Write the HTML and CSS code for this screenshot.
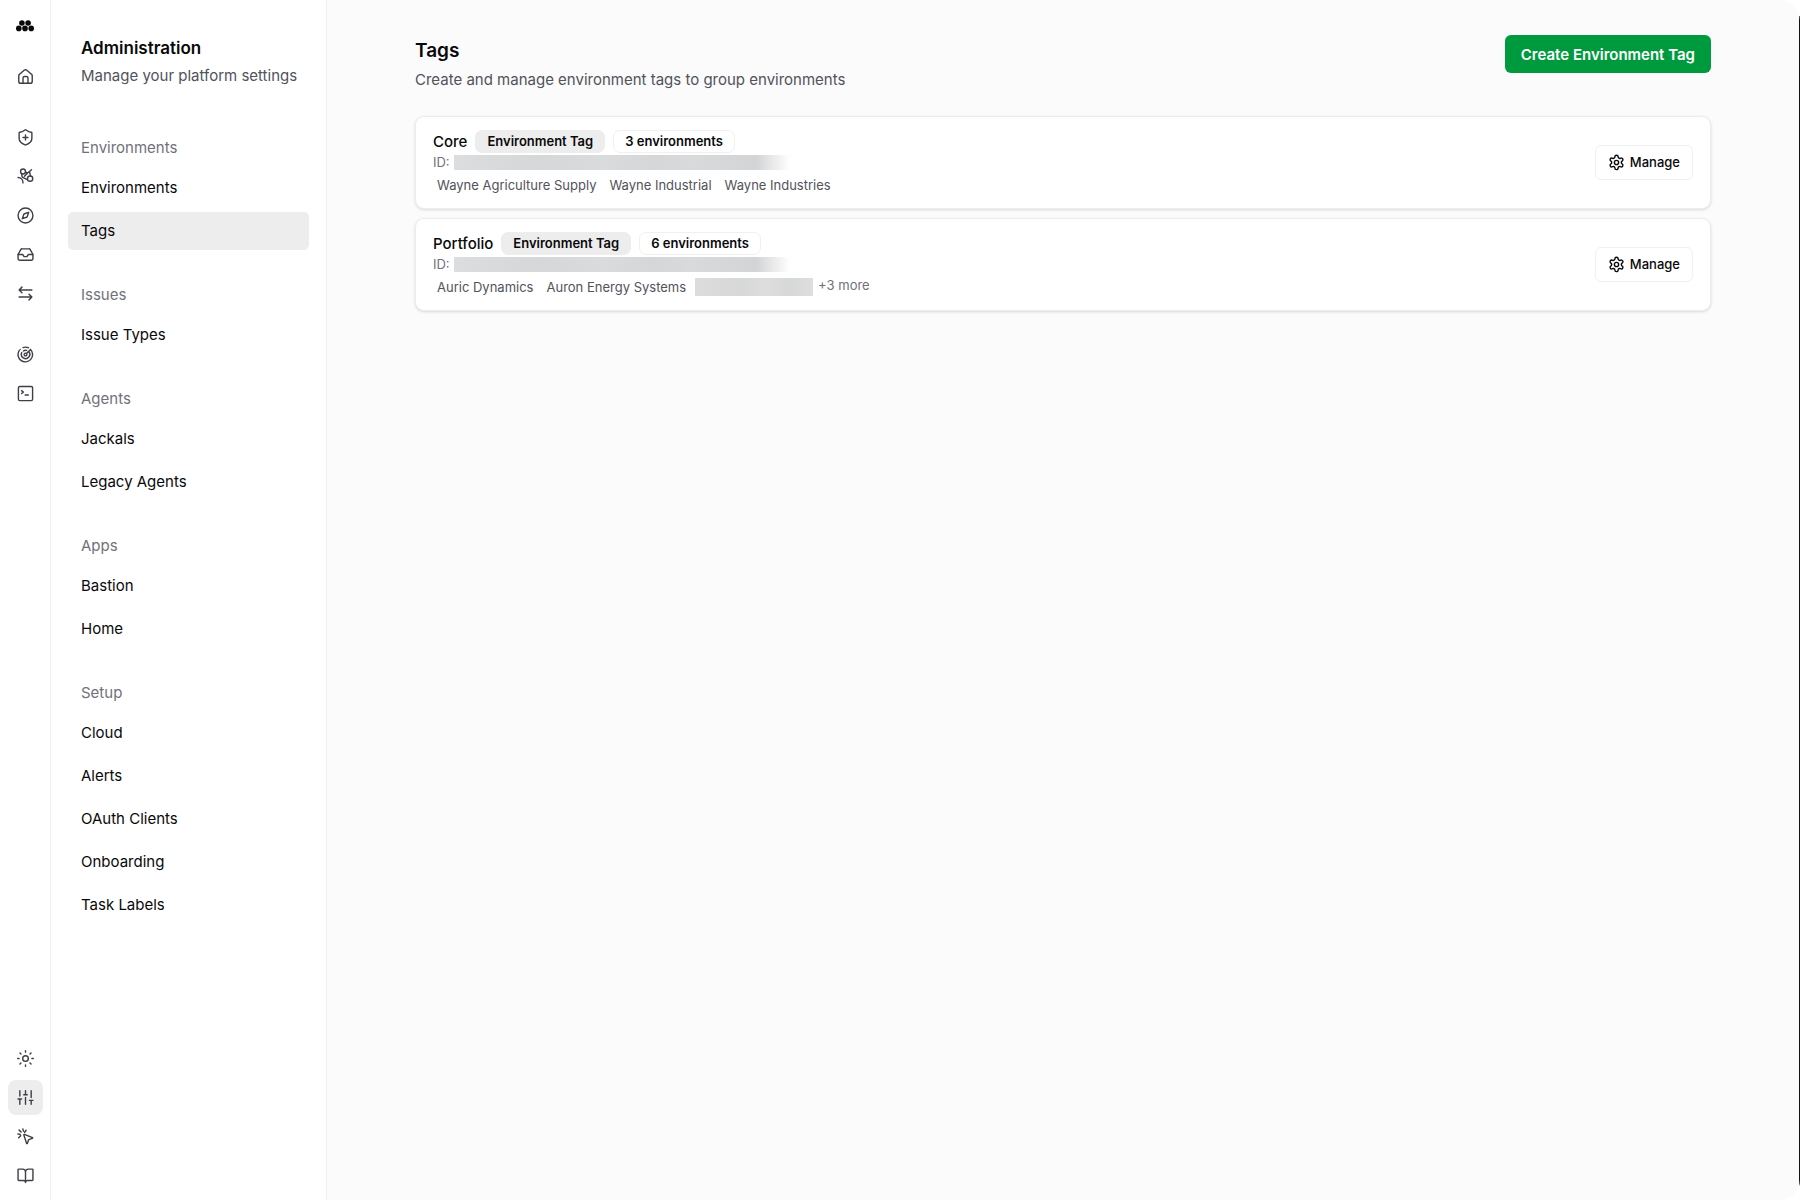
FILE: index.html
```html
<!DOCTYPE html>
<html lang="en">
<head>
    <meta charset="utf-8">
    <title>Tags - Administration</title>
    <link rel="stylesheet" href="styles.css">
</head>
<body>
    <div class="app">
        <nav class="rail" aria-label="Main">
            <a class="logo" href="#" aria-label="Dashboard">
                <svg width="18" height="12" viewBox="0 0 18 12" fill="currentColor"><circle cx="5.9" cy="3" r="2.8"/><circle cx="12.1" cy="3" r="2.8"/><circle cx="2.8" cy="8.4" r="2.8"/><circle cx="9" cy="8.4" r="2.8"/><circle cx="15.2" cy="8.4" r="2.8"/></svg>
            </a>
            <div class="rail-group">
                <a href="#" aria-label="Home"><svg class="icon" viewBox="0 0 24 24"><path d="M2.5 11a3 3 0 0 1 1.1-2.3l6.5-5.6a3 3 0 0 1 3.8 0l6.5 5.6a3 3 0 0 1 1.1 2.3v8a2.6 2.6 0 0 1-2.6 2.6H5.1A2.6 2.6 0 0 1 2.5 19z"/><path d="M8.5 21.5V14a2 2 0 0 1 2-2h3a2 2 0 0 1 2 2v7.5"/></svg></a>
            </div>
            <div class="rail-group">
                <a href="#" aria-label="Security"><svg class="icon" viewBox="0 0 24 24"><path d="M21 13c0 5-3.5 7.5-8.500 9.500a1.500 1.500 0 0 1-1 0C6.500 20.500 3 18 3 13V5.500a1 1 0 0 1 1-1c2.500 0 5-1.200 7.200-3a1.300 1.300 0 0 1 1.600 0c2.200 1.800 4.700 3 7.200 3a1 1 0 0 1 1 1z"/><path d="M8.500 12h7M12 8.500v7"/></svg></a>
                <a href="#" aria-label="Agents"><svg class="icon" viewBox="0 0 24 24"><circle cx="8.500" cy="5" r="3.500"/><circle cx="18.500" cy="15" r="3.700"/><path d="m15 7 5.500-4.500M17.500 5l1.500 6M6.500 8.500l1 4.500 7 3.500M12 6l3 1-4.500 4.500M1.500 13.500c4 0 7 3 7 7.500"/></svg></a>
                <a href="#" aria-label="Explore"><svg class="icon" viewBox="0 0 24 24"><circle cx="12" cy="12" r="10.500"/><path d="m16.500 7.500-2 6a1.600 1.600 0 0 1-1 1l-6 2 2-6a1.600 1.600 0 0 1 1-1z"/></svg></a>
                <a href="#" aria-label="Inbox"><svg class="icon" viewBox="0 0 24 24"><path d="M22.500 12H16l-2 3h-4l-2-3H1.500"/><path d="M5.300 5 1.500 12v6a2 2 0 0 0 2 2h17a2 2 0 0 0 2-2v-6l-3.800-7a2 2 0 0 0-1.800-1H7.100a2 2 0 0 0-1.800 1z"/></svg></a>
                <a href="#" aria-label="Transfers"><svg class="icon" viewBox="0 0 24 24"><path d="M7 3 3 7l4 4M3 7h18M17 13l4 4-4 4M21 17H3"/></svg></a>
            </div>
            <div class="rail-group">
                <a href="#" aria-label="Radar"><svg class="icon" viewBox="0 0 24 24"><path d="M19.100 4.900A10.300 10.300 0 1 1 3.100 6.500M4.500 4.800h.01M8.500 2.200A10.300 10.300 0 0 1 16 2.500M16.500 7.700a6 6 0 1 1-9.800 1.500M9 7.100a6 6 0 0 1 4.500-.9M18 12a6 6 0 0 1-4 5.500M13.400 10.600l5.700-5.700"/><circle cx="12" cy="12" r="2"/></svg></a>
                <a href="#" aria-label="Console"><svg class="icon" viewBox="0 0 24 24"><rect x="2" y="2" width="20" height="20" rx="2"/><path d="m6.500 8 2.500 2-2.500 2M11.500 14H16"/></svg></a>
            </div>
            <div class="rail-group rail-bottom">
                <a href="#" aria-label="Theme"><svg class="icon" viewBox="0 0 24 24"><circle cx="12" cy="12" r="4"/><path d="M12 1v2M12 21v2M4.200 4.200l1.400 1.400M18.400 18.400l1.400 1.400M1 12h2M21 12h2M4.200 19.800l1.400-1.400M18.400 5.600l1.400-1.400"/></svg></a>
                <a class="active" href="#" aria-label="Administration"><svg class="icon" viewBox="0 0 24 24"><path d="M4 21.500V14M4 10V2.500M12 21.500V12M12 8V2.500M20 21.500V16M20 12V2.500M1.500 14h5M9.500 8h5M17.500 16h5"/></svg></a>
                <a href="#" aria-label="Shortcuts"><svg class="icon" viewBox="0 0 24 24"><path d="M9.600 9.700a.6.6 0 0 1 .8-.7l11.500 4.500a.6.6 0 0 1-.1 1.100l-4.400 1.400a2 2 0 0 0-1.300 1.300l-1.400 4.400a.6.6 0 0 1-1.100.1zM8.300 1.200l.9 3.300M4.500 9.200l-3.300-.9M12.800 3.200l-2 3M5.200 11l-2.800 2.800M3 3l2.800 2.800"/></svg></a>
                <a href="#" aria-label="Documentation"><svg class="icon" viewBox="0 0 24 24"><path d="M12 6.500V22M2.500 19a1 1 0 0 1-1-1V4a1 1 0 0 1 1-1H8a4 4 0 0 1 4 4 4 4 0 0 1 4-4h5.500a1 1 0 0 1 1 1v14a1 1 0 0 1-1 1H15a3 3 0 0 0-3 3 3 3 0 0 0-3-3z"/></svg></a>
            </div>
        </nav>

        <aside class="sidebar">
            <header class="sidebar-header">
                <h2>Administration</h2>
                <p>Manage your platform settings</p>
            </header>
            <section>
                <h3>Environments</h3>
                <a href="#">Environments</a>
                <a class="active" href="#">Tags</a>
            </section>
            <section>
                <h3>Issues</h3>
                <a href="#">Issue Types</a>
            </section>
            <section>
                <h3>Agents</h3>
                <a href="#">Jackals</a>
                <a href="#">Legacy Agents</a>
            </section>
            <section>
                <h3>Apps</h3>
                <a href="#">Bastion</a>
                <a href="#">Home</a>
            </section>
            <section>
                <h3>Setup</h3>
                <a href="#">Cloud</a>
                <a href="#">Alerts</a>
                <a href="#">OAuth Clients</a>
                <a href="#">Onboarding</a>
                <a href="#">Task Labels</a>
            </section>
        </aside>

        <main>
            <header class="page-header">
                <div>
                    <h1>Tags</h1>
                    <p>Create and manage environment tags to group environments</p>
                </div>
                <button class="btn-primary">Create Environment Tag</button>
            </header>

            <article class="card">
                <div class="card-body">
                    <div class="card-title">
                        <h2>Core</h2>
                        <span class="badge badge-filled">Environment Tag</span>
                        <span class="badge">3 environments</span>
                    </div>
                    <div class="card-id">ID: <span class="redacted-id"></span></div>
                    <div class="env-list">
                        <span>Wayne Agriculture Supply</span>
                        <span>Wayne Industrial</span>
                        <span>Wayne Industries</span>
                    </div>
                </div>
                <button class="btn-manage"><svg class="gear" viewBox="0 0 24 24"><path d="M9.700 4.100a2.300 2.300 0 0 1 4.600 0 2.300 2.300 0 0 0 3.300 1.900 2.300 2.300 0 0 1 2.300 4 2.300 2.300 0 0 0 0 3.900 2.300 2.300 0 0 1-2.300 4 2.300 2.300 0 0 0-3.300 1.900 2.300 2.300 0 0 1-4.600 0 2.300 2.300 0 0 0-3.300-1.900 2.300 2.300 0 0 1-2.300-4 2.300 2.300 0 0 0 0-3.900 2.300 2.300 0 0 1 2.300-4 2.300 2.300 0 0 0 3.300-1.900"/><circle cx="12" cy="12" r="3"/></svg>Manage</button>
            </article>

            <article class="card">
                <div class="card-body">
                    <div class="card-title">
                        <h2>Portfolio</h2>
                        <span class="badge badge-filled">Environment Tag</span>
                        <span class="badge">6 environments</span>
                    </div>
                    <div class="card-id">ID: <span class="redacted-id"></span></div>
                    <div class="env-list">
                        <span>Auric Dynamics</span>
                        <span>Auron Energy Systems</span>
                        <span class="redacted-name"></span>
                        <small>+3 more</small>
                    </div>
                </div>
                <button class="btn-manage"><svg class="gear" viewBox="0 0 24 24"><path d="M9.700 4.100a2.300 2.300 0 0 1 4.600 0 2.300 2.300 0 0 0 3.300 1.900 2.300 2.300 0 0 1 2.300 4 2.300 2.300 0 0 0 0 3.900 2.300 2.300 0 0 1-2.300 4 2.300 2.300 0 0 0-3.300 1.900 2.300 2.300 0 0 1-4.600 0 2.300 2.300 0 0 0-3.300-1.900 2.300 2.300 0 0 1-2.300-4 2.300 2.300 0 0 0 0-3.900 2.300 2.300 0 0 1 2.300-4 2.300 2.300 0 0 0 3.300-1.900"/><circle cx="12" cy="12" r="3"/></svg>Manage</button>
            </article>
        </main>
    </div>
</body>
</html>
```
FILE: styles.css
```css
* {
    box-sizing: border-box;
}
body {
    margin: 0;
    background: #ffffff;
    color: #09090b;
    font-family: Inter, "Liberation Sans", sans-serif;
    font-size: 15px;
    line-height: 24px;
}
h1, h2, h3, p {
    margin: 0;
}
a {
    color: inherit;
    text-decoration: none;
}
button {
    font-family: inherit;
    cursor: pointer;
}
.app {
    position: relative;
    display: flex;
    min-height: 100vh;
    border-radius: 20px;
    overflow: hidden;
}
/* dark window edge */
.app::after {
    content: "";
    position: absolute;
    top: 16px;
    right: 0;
    bottom: 12px;
    width: 1px;
    background: #111111;
}

/* icon rail */
.rail {
    display: flex;
    flex-direction: column;
    align-items: center;
    gap: 26px;
    width: 51px;
    padding: 20px 0 7px;
    border-right: 1px solid #f0f0f0;
    color: #3f3f46;
}
.logo {
    display: flex;
    height: 13px;
    color: #09090b;
}
.rail-group {
    display: flex;
    flex-direction: column;
    gap: 4px;
}
.rail-group a {
    display: flex;
    align-items: center;
    justify-content: center;
    width: 35px;
    height: 35px;
    border-radius: 8px;
}
.rail-group a.active {
    background: #ededed;
}
.rail-bottom {
    margin-top: auto;
}
.icon {
    width: 17px;
    height: 17px;
}
.icon, .gear {
    fill: none;
    stroke: currentColor;
    stroke-width: 2;
    stroke-linecap: round;
    stroke-linejoin: round;
}

/* admin menu */
.sidebar {
    display: flex;
    flex-direction: column;
    gap: 33px;
    width: 276px;
    padding: 34px 17px;
    border-right: 1px solid #f0f0f0;
}
.sidebar-header {
    padding-left: 13px;
    margin-bottom: 15px;
    white-space: nowrap;
}
.sidebar-header h2 {
    margin-bottom: 2px;
    font-size: 17px;
    font-weight: 600;
    line-height: 28px;
}
.sidebar-header p, .page-header p {
    color: #52525b;
}
.sidebar section {
    display: flex;
    flex-direction: column;
    gap: 5px;
}
.sidebar h3 {
    padding: 0 13px;
    margin-bottom: 4px;
    color: #71717a;
    font-size: 15px;
    font-weight: 400;
}
.sidebar section a {
    padding: 7px 13px;
    border-radius: 5px;
}
.sidebar section a.active {
    background: #ededed;
}

/* content */
main {
    display: flex;
    flex: 1;
    flex-direction: column;
    gap: 9px;
    padding: 35px 89px 35px 88px;
    background: #fbfbfb;
}
.page-header {
    display: flex;
    align-items: flex-start;
    justify-content: space-between;
    margin-bottom: 15px;
}
.page-header h1 {
    margin-bottom: 1px;
    font-size: 19px;
    font-weight: 600;
    line-height: 32px;
}
.btn-primary {
    height: 38px;
    padding: 0 16px;
    border: 0;
    border-radius: 6px;
    background: #009a3e;
    color: #ffffff;
    font-size: 15px;
    font-weight: 600;
}
.card {
    display: flex;
    align-items: center;
    justify-content: space-between;
    padding: 13px 17px 14px;
    border: 1px solid #ededee;
    border-radius: 9px;
    background: #ffffff;
    box-shadow: 0 1px 3px rgba(0, 0, 0, 0.14);
}
.card-title {
    display: flex;
    align-items: center;
    gap: 8px;
}
.card-title h2 {
    font-size: 15px;
    font-weight: 500;
    line-height: 23px;
}
.badge {
    padding: 0 11px;
    border: 1px solid #f0f0f0;
    border-radius: 7px;
    font-size: 13px;
    font-weight: 600;
    line-height: 21px;
}
.badge-filled {
    border-color: #ededed;
    background: #ededed;
}
.card-id {
    display: flex;
    gap: 4px;
    color: #71717a;
    font-size: 13px;
    line-height: 18px;
}
.redacted-id {
    width: 336px;
    height: 15px;
    margin-top: 2px;
    background: linear-gradient(90deg, #dcddde, #d6d7d8 25%, #dadbdc 45%, #d5d6d8 60%, #d9dadb 70%, #d3d4d6 90%, #ffffff);
}
.env-list {
    display: flex;
    margin-top: 5px;
    gap: 5px;
    color: #52525b;
    font-size: 13px;
    line-height: 18px;
}
.env-list span {
    padding: 0 4px;
}
.env-list .redacted-name {
    width: 118px;
    background: linear-gradient(90deg, #dcdcdc, #d7d8d8 40%, #dddddd 60%, #d7d8d8 80%, #dededf);
}
.env-list small {
    color: #71717a;
    font-size: 13px;
    line-height: 15px;
}
.btn-manage {
    display: flex;
    align-items: center;
    gap: 5px;
    height: 35px;
    padding: 0 12px;
    border: 1px solid #f0f0f0;
    border-radius: 6px;
    background: #ffffff;
    color: #09090b;
    font-size: 13px;
    font-weight: 500;
}
.gear {
    width: 17px;
    height: 17px;
}
```
